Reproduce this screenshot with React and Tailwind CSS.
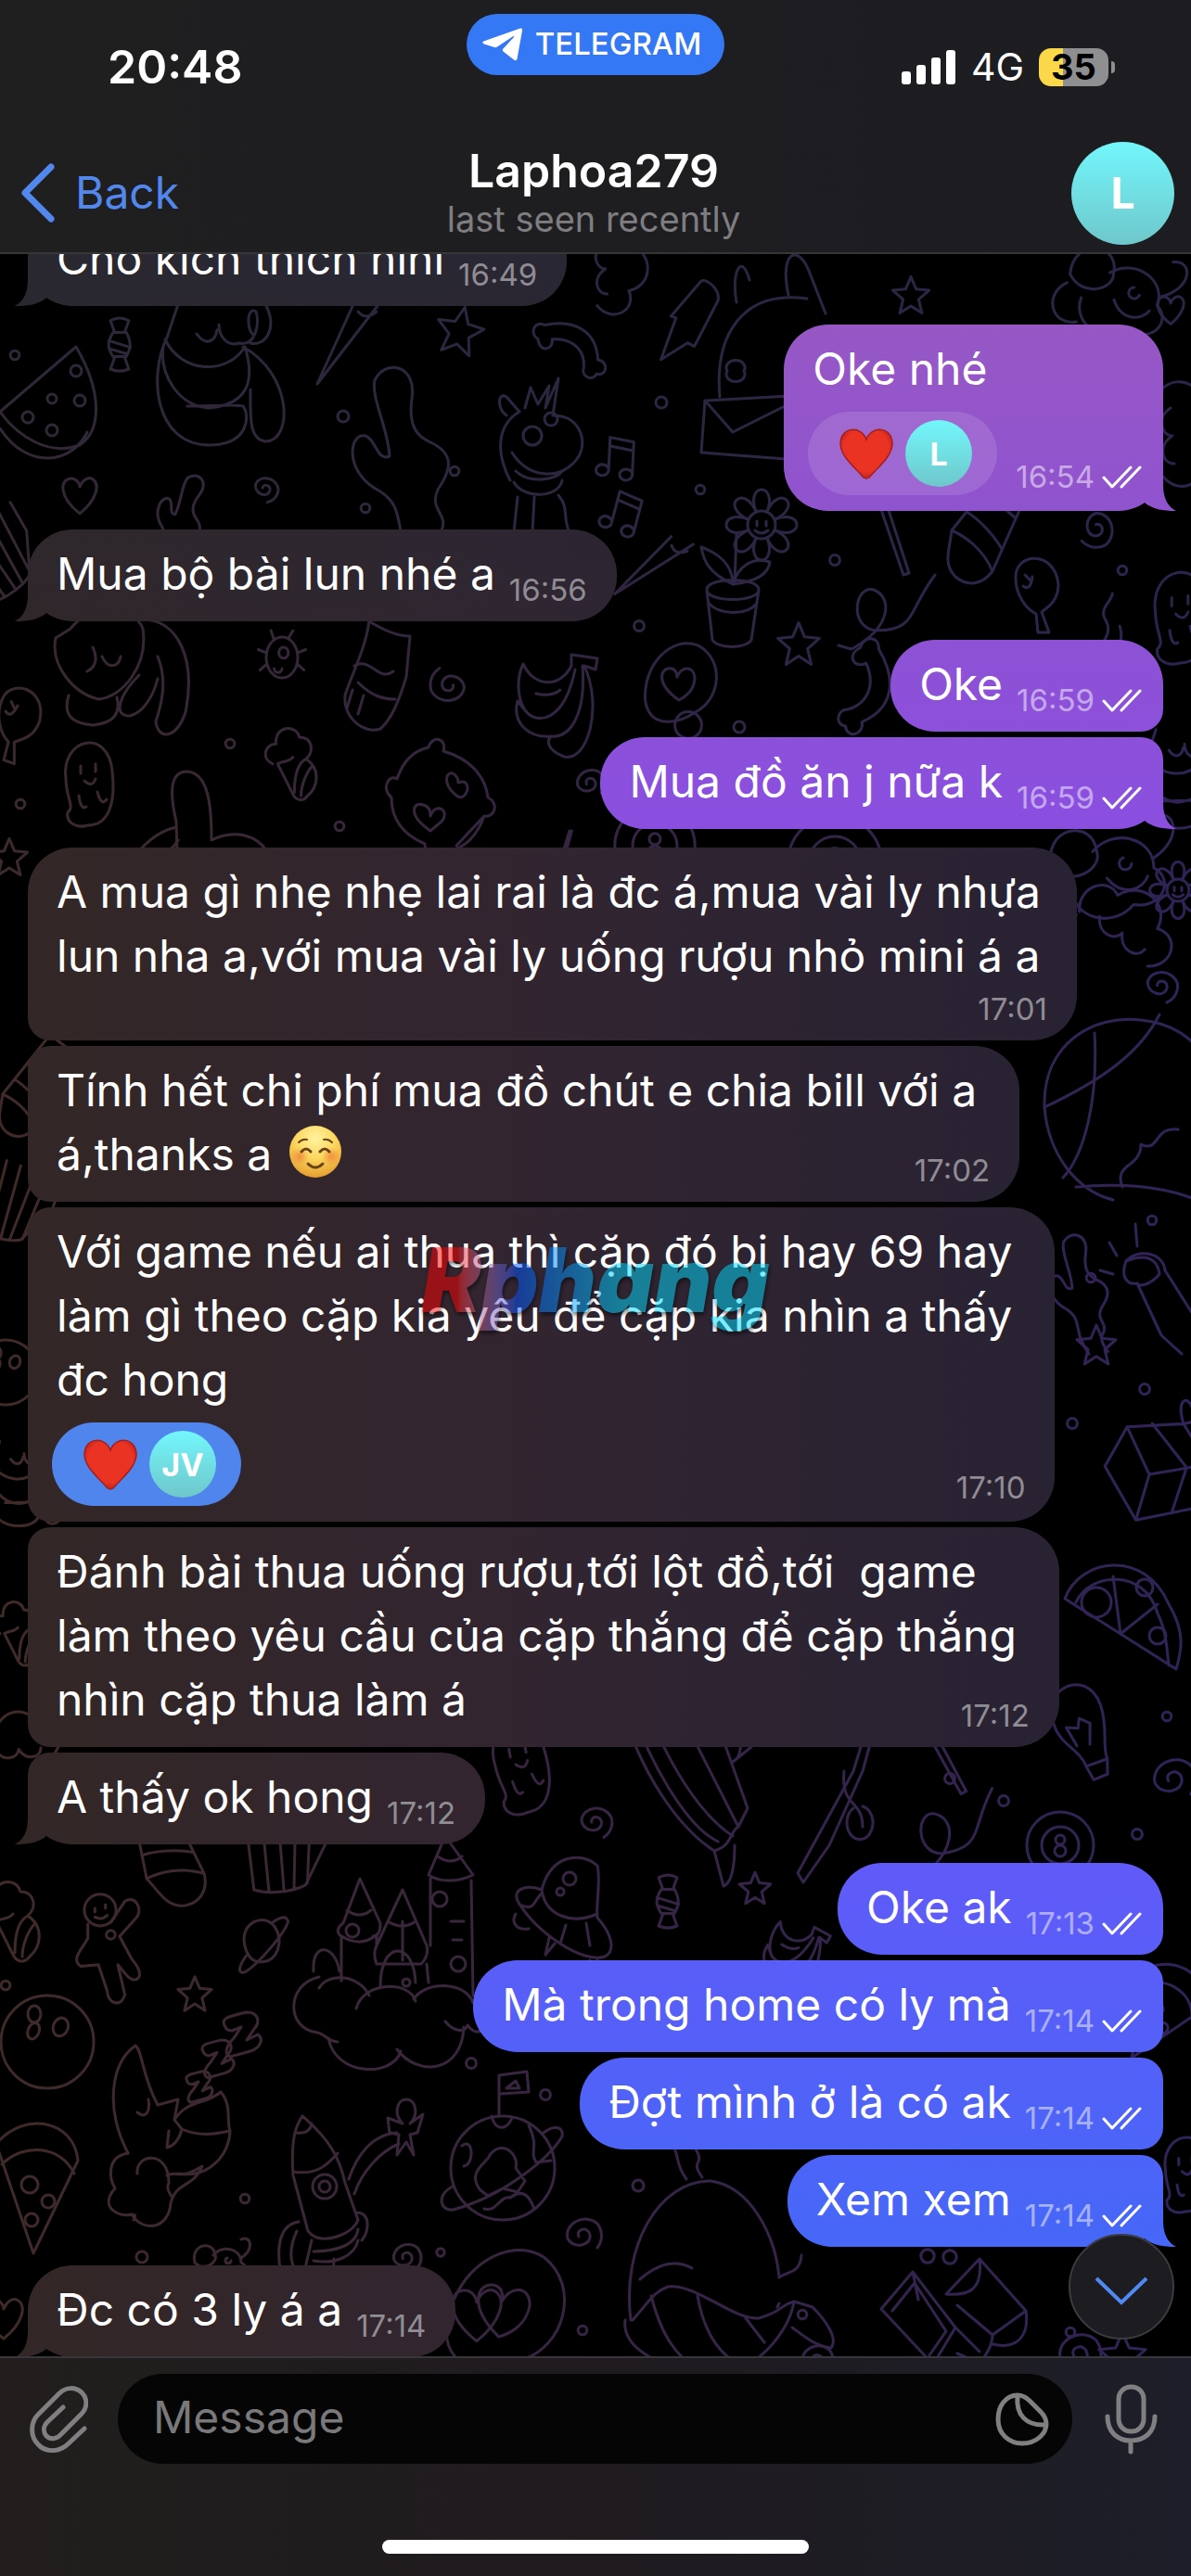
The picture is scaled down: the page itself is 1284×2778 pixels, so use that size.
import React from "react";

const MOTIFS = {
  star: <path d="M0-28L8-9L28-7L12 7L17 28L0 17L-17 28L-12 7L-28-7L-8-9Z" />,
  spiral: <path d="M-2 2C-6-6 8-10 10 0C12 12-8 16-14 4C-18-12 4-24 18-12C24-4 24 6 18 14" />,
  dot: <circle r="6" />,
  heart: <path d="M0 22C-26 2-24-20-10-20C-4-20 0-14 0-10C2-16 8-22 14-20C26-14 20 6 0 22Z" />,
  candy: (
    <path d="M-6-14L-11-28C-4-32 4-32 11-28L6-14M-8-14C-15-2-15 4-8 15L8 15C14 4 14-2 8-14ZM-13-4L13 4M-11 6L9 12M-6 16L-11 30C-4 33 4 33 11 30L6 16" />
  ),
  note: <path d="M-14 18a8 7 0 1 1-1-4M-14 18L-12-24L18-18L16 24a8 7 0 1 1-1-4M-12-13L17-7" />,
  bone: (
    <path d="M-40-12C-52-20-44-36-32-30C10-38 34-20 36 14C50 16 48 36 34 32C30 42 14 36 18 24C20 6 8-14-22-12C-20 2-38 6-40-12Z" />
  ),
  flower: (
    <g>
      <circle r="15" />
      <path d="M-5-4L-5 1M5-4L5 1M-7 6Q0 12 7 6" />
      {[0, 45, 90, 135, 180, 225, 270, 315].map((a) => (
        <path key={a} transform={`rotate(${a})`} d="M-6-14C-18-46 18-46 6-14" />
      ))}
    </g>
  ),
  pot: (
    <path d="M-28-10C-28-24 28-24 28-10C28 4-28 4-28-10L-22 44C-16 54 14 54 20 44L28-10M-26 4C-16 18 18 18 26 4M0-16C-30-30-32-46-34-56C-12-48 0-34 0-16C6-36 22-46 40-40C38-24 18-18 0-16M2-16L4-70" />
  ),
  banana: (
    <path d="M22-56L50-52L48-40L36-44C56 0 40 60 14 54C-6 46-4 36 0 32C-24 34-42 18-36-6L-28 4C-38-12-36-34-30-46C-18-20 10-20 22-44ZM-28 4C-16 20 14 18 26-40M0 32C20 34 38 10 34-44M-16-14Q0-10 10-18" />
  ),
  avocado: (
    <g>
      <path d="M-36 22C-40-22-4-54 24-42C54-26 50 20 20 34C4 46-30 54-36 22Z" />
      <path d="M2 20C-24 2-20-16-8-16C-2-16 0-10 0-6C4-18 18-20 20-6C20 8 10 16 2 20Z" />
    </g>
  ),
  ghost: (
    <path d="M-24 0C-30-44 22-56 26-8C30 26 22 50 0 50C-14 54-24 46-22 36C-14 30-24 20-24 0M-8-14V-6M8-16V-8M-4 2Q4 10 8 0M-10 18Q-8 34-2 30M10 14Q14 30 20 22" />
  ),
  cupcake: (
    <path d="M-20 2C-34-4-30-22-16-22C-18-44 8-46 12-30C28-30 30-12 20-4C38 8 34 30 22 40C16 48 8 46 4 38L-14 2C-8-2 0 0 4-6M20-4C8 2 6 20 6 36M28 4C20 12 14 28 14 40" />
  ),
  pillow: (
    <path d="M-10-50C-6-64 10-60 6-46C40-36 52-14 54 4C66 10 62 26 50 24C40 52 20 64 6 60C-2 72-14 66-14 54C-42 42-50 22-50 4C-62-6-52-22-44-16C-38-34-28-46-10-50M-8 40C-34 22-26 8-16 12C-8 14-8 20-8 24C-2 8 14 18 4 30ZM18 0C6-10 8-24 16-22C20-20 22-16 22-12C32-16 34-6 30 0C26 6 22 4 18 0M50 24L20 56" />
  ),
  sock: (
    <path d="M-6-60C10-50 26-44 38-44L34 0C26 26 18 46 6 56C-12 62-34 44-32 20C-26 0-10-30-6-60ZM-22-12C-4-22 4 6 20-6M-18 6C-4 20 8 24 22 24M-24 14L-30 34M-12 20L-18 40" />
  ),
  duck: (
    <path d="M-6 60L-8-10C-16-44-14-64 4-64C26-62 30-30 30 10C54-2 78 4 90 22L110 38M-8-4C-34 2-50 22-60 38C-30 34-14 24-6 10M80 22L104 52" />
  ),
  bug: (
    <path d="M-20 0a20 26 0 1 0 40 0a20 26 0 1 0-40 0M-10-22L-14-34M8-24L14-34M-20-6L-30-10M20-6L30-10M-19 8L-28 16M19 8L28 16M-4-6a6 7 0 1 0 12 0a6 7 0 1 0-12 0M-10 14a5 5 0 1 0 10 0" />
  ),
  puppy: (
    <path d="M-60-40C-66-10-40 20-14 26C12 24 40-10 34-50C24-76-20-80-44-50ZM-46 22C-52 42-44 52-20 54C4 52 10 40 6 24M34-60C70-60 92-20 80 40C70 70 50 70 48 50C58 20 58 0 50-20M30 0C10 20 0 44 20 44C36 40 46 20 50 4M-20-30C-16-22-14-10-26-4M-10-20C-4-6 8-8 10-20" />
  ),
  watermelon: (
    <g>
      <path d="M-54 40L28-30C56 18 56 60 32 76C0 88-34 68-54 40M40 62C24 96-24 104-54 58" />
      <circle cx="28" cy="-4" r="6" />
      <circle cx="2" cy="26" r="5" />
      <circle cx="32" cy="28" r="6" />
      <circle cx="-24" cy="46" r="6" />
      <circle cx="2" cy="60" r="6" />
    </g>
  ),
  bear: (
    <path d="M-34-76L-46-40C-66 0-60 76 0 76C42 76 44 44 36 34C34 32-4 34-24 34M36-30C90 0 90 72 60 72C42 70 44 44 44 16M-48-38C-30 0 20 0 38-30C50 8 40 32 0 36C-34 34-54 0-50-30M-14-44C-4-30 6-36 8-48M10-54C10-40 20-30 32-34C50-30 54-56 50-68C40-74 40-50 46-44M60-76C74-50 60-30 44-34" />
  ),
  carrot: <path d="M12-44L-28 44L40-44M16-34Q24-24 36-34" />,
  giraffe: (
    <g>
      <path d="M-30 40C-46 10-44-20-20-34L-34-50C-44-56-44-36-34-30M-14-38L-8-60L0-42L12-62L8-38L22-70L16-30C44-30 54-4 44 14C28 40-10 40-28 10M-26 42C-16 60 22 60 26 40M-24 30C-10 44 20 40 26 30M-22 58L-26 96M22 56C34 70 26 80 34 96M-4 58L-6 96" />
      <circle cx="-6" cy="-8" r="10" />
      <circle cx="14" cy="-26" r="7" />
    </g>
  ),
  envelope: (
    <path d="M-50 10L60 4L50 74L-54 66ZM-50 10L-20 44L60 4M-34 6C-40-60-10-110 60-100M-16-96C-22-130-10-150-2-120M40-104C30-150 50-160 62-130L80-84M-26-22a10 8 0 1 0 18 0a10 8 0 1 0-18 0" />
  ),
  bolt: <path d="M22-52L-14-10L-8-8L-26 42L6 22L14 26L42-28C46-40 30-56 22-52Z" />,
  balloon: (
    <path d="M40 100C10 60 30 40 0 20C-40 0-34-44-16-40C-4-36-4-12 10-18C8-50-10-80-6-100C6-124 40-116 34-80C30-50 40-40 52-34C84-20 74 0 62 18C52 40 74 44 66 62C58 74 66 84 74 96" />
  ),
  lolly: (
    <path d="M-2-22L26 60L32 58L6-22M-8-24L12-24M60 60C30 100 40 120-4 120C-34 116-26 70-6 76C14 84 14 116-30 140L-44 136" />
  ),
  cone: <path d="M-30 50C-44 36-36 20-34 0L30-80L56-60L10 44C-2 60-18 60-30 50ZM-34 0C-20 6 0 20 10 44M0-40C14-34 26-20 34-14M-18-20C-4-12 12 6 20 20" />,
  chick: <path d="M-22-6C-24-34 20-38 24 0C24 20 10 26 6 30L14 52L2 52L0 32C-12 26-22 10-22-6M-12-10L-6-4M-14 2Q-6 8-4-8" />,
  steam: <path d="M-10 40C-24 20 10 10-6-16C-14-30 4-40 4-50M14 40C4 24 22 16 14-6" />,
  basketball: (
    <path d="M-64 10C-66-60-10-90 40-84C80-80 100-60 120-30M-64 10C-60 60-30 100 10 110M-64 10C0-20 40-50 60-90M-10-70C-6 0-20 60-44 86M-30 96C40 90 100 100 130 130M20 96C10 70 40 76 40 50C60 60 54 30 80 34" />
  ),
  pizza: (
    <g>
      <path d="M-56 4C-40-40 30-50 56 10C74 40 70 60 64 80L4 42ZM-44 8C-30-24 30-30 44 20C54 40 54 60 56 76M4 42L-4-20M4 42L44 10" />
      <circle cx="-22" cy="8" r="16" />
      <circle cx="30" cy="-8" r="9" />
      <circle cx="44" cy="44" r="9" />
    </g>
  ),
  slice: (
    <g>
      <path d="M-40-18C-10-54 44-44 48 0L0 100ZM-34 4C-10-20 30-16 44 14" />
      <circle cx="-4" cy="26" r="9" />
      <circle cx="16" cy="44" r="7" />
      <circle cx="-2" cy="64" r="7" />
    </g>
  ),
  bulb: (
    <path d="M-30-20C-34-60 20-70 24-26C26 0 14 16 16 32L-8 34C-10 14-30 4-30-20ZM-8 34L-4 50L12 48L16 32M-12 10L-18-12L-6-8L-2-18L8-10L2 12" />
  ),
  torch: (
    <path d="M-20-20C-26-4-20 6-8 4L18 60L40 80M-20-20C-8-34 20-30 22-10L60 50M-20-20C0-28 14-24 16-6C6 6-6 8-8 4M-30-26L-38-40M-34-6L-48-10M-8-36L-10-60" />
  ),
  gift: <path d="M-50-10L20-40L70 0L0 40ZM-50-10L-60 50L4 104L0 40M4 104L76 60L70 0M-20-26L44 14L46 78M20-40C0-66 10-80 24-64C44-80 50-56 20-40" />,
  castle: (
    <g>
      <path d="M-64 4L-64-44C-70-48-68-54-62-58L-44-106L-22-58C-22-50-24-44-30-44M-64-44Q-44-32-28-44M-26-14C-30-24-28-30-26-34L2-94L28-34C30-26 28-20 22-14ZM-26-46L-26-34M30 6L28-14M30-110L48-152L78-110C60-102 42-102 30-110ZM32-106L32-34M76-104L78 20M-58-72Q-44-62-32-72M-14-60Q2-50 16-60M40-130Q54-120 66-130M2-60L2-18M56-40L66-40M54-60L68-60M-22 10C-22-40 14-40 16 6" />
      <circle cx="42" cy="-84" r="8" />
      <circle cx="-52" cy="-50" r="7" />
      <circle cx="62" cy="-14" r="8" />
      <circle cx="6" cy="6" r="4" />
      <path d="M-94-6C-96-40-70-34-66-6M-88 12C-78-6-44-2-34 20M-48 34C-40 4 10 4 16 26M14 24C26 4 70 4 78 28M-88 0C-124 8-124 56-90 60C-84 60-78 70-68 70M-78 66C-70 108-8 108 0 80M-4 78C18 108 66 104 68 54M48 48C58 60 70 60 72 52C86 70 96 50 90 34" />
    </g>
  ),
  ufo: (
    <g>
      <path d="M-34-24C-24-62 8-66 26-50C30-34 24-4 26 6C42 24 46 42 34 48C10 56-40 22-60-12C-66-26-48-30-34-24C-30 4-2 14 26 2M-58-8C-40 0-44-12-34-20M-62 2C-68 12-60 20-48 18M-26 28L-30 46L-20 34M-14 34L-8 14M14 12L18 36M18 52L22 64L26 52" />
      <circle cx="-4" cy="-36" r="7" />
      <circle cx="-14" cy="-22" r="4" />
    </g>
  ),
  zed: <path d="M-18-12C-22-20-12-22 6-26C20-26 20-14 14-8L6 4L18-2C24 2 22 12 10 16L-12 22C-20 18-14 8-8 2L0-10L-10-6Q-16-6-18-12Z" />,
  gingerbread: (
    <g>
      <circle cy="-36" r="18" />
      <path d="M12-22L28-46C40-54 50-36 40-26L22-6L36 20C54 40 40 50 30 38L20 26L28 60C24 76 8 70 8 56L-2 26L-22 28C-34 20-20 8-14-4L-14-20M-6-38L-6-34M6-42L6-38M-6-28Q2-24 8-30" />
      <circle cx="12" cy="-8" r="5" />
    </g>
  ),
  saturn: <path d="M-18 4C-24-22 4-36 18-18C30 0 20 24 4 24C-10 26-16 14-18 4M-14 14C-30 34-24 42-14 34C0 24 30-10 34-24C32-32 24-30 14-22" />,
  bowling: (
    <g>
      <circle r="50" />
      <ellipse cx="-14" cy="-30" rx="7" ry="9" />
      <ellipse cx="8" cy="-20" rx="8" ry="10" transform="rotate(20)" />
      <ellipse cx="-18" cy="-6" rx="6" ry="9" transform="rotate(20)" />
    </g>
  ),
  moon: (
    <g>
      <path d="M-30 56C-54 10-50-40-22-60C-14-54-16-30 2 4L24-2L20 20L28 30C46 38 62 36 80 32C80 54 60 84 24 78M20 20C34-2 54 4 70-10C82 4 76 20 80 32M-20 12C-10 20-6 10-8-2M14 32L12 50C20 48 26 40 28 30" />
      <path d="M-30 56C-54 60-50 84-44 94C-62 114-40 126-26 122C-14 142 14 138 16 110M-26 122Q-20 122-24 128M-20 78C-22 56 14 52 14 88C12 92 12 96 18 104M12 80C24 74 24 86 50 70C40 94 22 86 16 110" />
    </g>
  ),
  rocket: (
    <g>
      <path d="M-18 40L-34-20C-36-50-34-70-24-84C4-60 16-40 22-12L36 28C30 44 0 54-14 44ZM-34-24C-10-20 2-30 14-44M-32-66Q-16-64-14-76M-28 30C-54 34-52 70-44 100C-20 120 10 110 10 70M-30 40C-44 70-30 94-22 84L-14 50M34 20C50 20 48 40 40 50M-12 62C10 62 34 56 36 38M-12 72C10 76 32 68 36 50" />
      <circle cx="0" cy="-8" r="13" />
      <circle cx="0" cy="-8" r="6" />
      <path d="M26-16C34-40 50-64 78-66M32 0C40-24 60-46 80-54M84-76C74-86 78-102 88-102C98-102 102-86 92-76L106-86L100-66L92-64L96-42L88-56L78-42L80-64L70-66L68-82Z" />
    </g>
  ),
  planet: (
    <g>
      <circle r="56" />
      <path d="M-4-56L-4-100L26-104L28-82L-2-80M4-86L14-94L18-86ZM-12-56C-8-40 4-40 10-54M-54 20C-74 30-66 50-50 44C0 30 50-10 64-34C66-46 54-46 44-38M-24 24C-40 4-16-6-14-14C0-32 18-14 14 0L24 14L16 26L0 22L-16 30ZM-44-24C-32-34-30-4-42-2M28-46C40-20 28-20 36-6L52-8M-20 44C-6 48-4 30 8 32C24 20 30 34 34 44" />
    </g>
  ),
  whale: (
    <path d="M-100 110C-110 30-70-40-14-40C30-34 56 20 60 64C72 56 82 60 84 40M-98 110C-80 90-76 80-60 74C-30 70 10 110 38 108C66 100 60 94 76 90C70 130 20 178-20 170C-70 160-110 140-106 110M-78 84C-66 130-50 150-20 170M-28 84C-20 130 0 150 20 160M76 90L96 96C110 110 124 130 116 140C100 138 90 130 74 118M24 108L44 134M-90 66Q-60 40-34 54M58 96L60 92" />
  ),
  chocolate: (
    <path d="M-70 0L-36-40L10 20L-14 60ZM-58 2L-34-28L0 24L-18 50M-36-40L-30-10M0-16L36-54C40-20 24-14 0-16ZM36-54L86 2C90 30 76 44 50 38M86 2L50 28L12-4M50 28C50 40 40 60 20 70M-14 60L-10 80M10 20L36 46M12 48L40 60" />
  ),
  popcorn: <path d="M-50-80L-38 20C-20 26 10 22 24 14L50-40L50-84M-30-80L-20 22M-10-80L-2 22M12-80L10 18M30-80L26 12" />,
  boat: <path d="M-60-90C-40-20 0 40 40 66C60 60 56 46 66 40L76 20L44-70M-50-90C-30-30 10 40 44 56M-30-80C0-10 30 30 60 50M0-90L66 40M40 66L50 104C60 100 62 80 62 60M44-70C60-100 80-40 60-30M60-30L80-46" />,
  wand: <path d="M60-110L20 20L-40 130L-34 140L-6 100L30 20L66-110M10 20C6 60 30 50 30 80M20 60a14 18 0 1 0 10-2" />,
  eight: (
    <g>
      <circle r="36" />
      <circle r="20" />
      <circle cy="-6" r="5" />
      <circle cy="6" r="6" />
    </g>
  ),
  crab: <path d="M-60 0C-70-40-20-50-16-16C-10 0-40 20-60 0M-20-16C0-40 40-30 40 0C60 10 50 40 20 36C0 60-40 50-40 20M40-10C70-30 60-60 40-50M10-10a6 6 0 1 0 8 6M-6 10C10 30 30 20 34 8M-60 10C-80 30-60 60-36 46" />,
  cloudy: <path d="M-50 20C-70 0-50-30-30-20C-20-50 20-50 26-20C50-30 66 0 44 18M-30 10C-20 26 0 20 0 8C10 24 30 20 30 6" />,
};

const PLACED = [
  ["watermelon", 54, 404, 1, 0], ["candy", 129, 371, 0.9, 0], ["bear", 226, 404, 1, 0],
  ["carrot", 370, 370, 1, 0], ["star", 496, 356, 0.9, 12], ["bone", 614, 376, 0.85, 0],
  ["balloon", 410, 510, 1, 0], ["giraffe", 580, 478, 1, 0], ["note", 668, 492, 0.85, 0],
  ["note", 674, 552, 0.85, 12], ["heart", 86, 534, 0.9, 0], ["spiral", 285, 526, 0.7, 40],
  ["bolt", 736, 350, 0.9, 0], ["envelope", 810, 422, 1, 0], ["star", 982, 318, 0.7, 0],
  ["dot", 16, 383, 0.8, 0], ["dot", 370, 449, 1, 0], ["dot", 713, 434, 1, 0], ["dot", 490, 508, 0.8, 0],
  ["dot", 394, 548, 0.8, 0], ["dot", 755, 528, 0.8, 0], ["crab", 1210, 316, 1, 20],
  ["heart", 1262, 334, 0.7, 0], ["cloudy", 660, 290, 0.9, 90], ["balloon", 180, 560, 0.5, 30],
  ["flower", 821, 566, 1, 0], ["pot", 790, 646, 1, 0], ["lolly", 948, 560, 1, 0],
  ["cone", 1060, 572, 1, 0], ["spiral", 1183, 568, 1, 100], ["chick", 1117, 630, 1, 0],
  ["carrot", 700, 612, 0.9, 20], ["dot", 900, 604, 0.9, 0], ["dot", 1210, 615, 0.8, 0],
  ["steam", 1196, 680, 0.8, 0], ["ghost", 1272, 660, 1.1, 0], ["cloudy", 1272, 470, 1, 90],
  ["popcorn", 10, 620, 0.8, -30], ["puppy", 120, 728, 1, 0], ["bug", 304, 709, 0.85, 0],
  ["sock", 404, 730, 1, 0], ["spiral", 486, 740, 1, 200], ["banana", 594, 762, 1, 0],
  ["avocado", 730, 736, 0.95, 0], ["dot", 689, 675, 0.9, 0], ["star", 861, 694, 0.8, 0],
  ["dot", 797, 784, 1, 0], ["dot", 742, 782, 2.4, 0], ["bone", 930, 740, 1, 70],
  ["ghost", 95, 840, 1, 0], ["cupcake", 312, 822, 0.9, 0], ["dot", 248, 802, 0.8, 0],
  ["dot", 22, 867, 0.8, 0], ["duck", 198, 896, 1, 0], ["pillow", 472, 856, 1, 0],
  ["dot", 366, 891, 0.8, 0], ["spiral", 634, 844, 0.8, 0], ["chick", 20, 770, 1, 20],
  ["eight", 706, 912, 1.2, 0], ["wand", 590, 940, 0.4, 0], ["eight", 900, 930, 1.4, 0],
  ["bear", 1270, 840, 0.7, 0], ["crab", 1200, 936, 1.1, 0], ["cloudy", 1215, 1000, 1, 40],
  ["spiral", 1250, 1062, 0.9, 30], ["flower", 1270, 960, 0.8, 0], ["basketball", 1190, 1184, 1, 0],
  ["star", 10, 924, 0.7, 0], ["cone", 30, 1180, 0.8, 0], ["popcorn", 8, 1320, 0.8, 20],
  ["bowling", 6, 1480, 0.7, 0], ["torch", 1234, 1380, 1, 0], ["star", 1182, 1450, 0.75, 0],
  ["dot", 1176, 1378, 0.8, 0], ["dot", 1242, 1316, 0.8, 0], ["dot", 1234, 1498, 0.9, 0],
  ["dot", 1156, 1535, 0.9, 0], ["gift", 1250, 1560, 0.8, 20], ["balloon", 1150, 1400, 0.6, 0],
  ["bear", 20, 1600, 0.6, 0], ["pizza", 1204, 1720, 1, 0], ["bulb", 1170, 1870, 1, -15],
  ["spiral", 1262, 1918, 1.2, 0], ["dot", 1258, 1851, 0.8, 0], ["cupcake", 16, 1760, 0.8, 0],
  ["boat", 730, 1930, 1, 0], ["wand", 900, 1890, 1, 0], ["lolly", 1000, 1880, 1, -10],
  ["dot", 1024, 1918, 0.9, 0], ["dot", 1082, 1942, 0.9, 0], ["eight", 1143, 1990, 1, 0],
  ["dot", 1226, 1978, 0.9, 0], ["ghost", 560, 1900, 1.1, -10], ["spiral", 640, 1964, 0.9, 20],
  ["cone", 180, 2000, 1, -50], ["popcorn", 308, 2020, 0.9, 0], ["cloudy", 20, 1880, 0.8, 0],
  ["cupcake", 10, 2070, 1, 0], ["gingerbread", 108, 2094, 0.95, 0], ["saturn", 280, 2094, 0.9, 0],
  ["castle", 432, 2132, 1, 0], ["ufo", 618, 2062, 1, 0], ["candy", 720, 2050, 0.9, 0],
  ["star", 814, 2036, 0.6, 0], ["banana", 850, 2110, 0.7, 20], ["star", 210, 2150, 0.65, 0],
  ["bowling", 51, 2202, 1, 0], ["moon", 168, 2266, 1, 0], ["zed", 260, 2196, 1, 0],
  ["zed", 234, 2222, 0.85, 0], ["zed", 214, 2252, 0.7, 0], ["slice", 36, 2330, 1, 0],
  ["dot", 6, 2141, 0.8, 0], ["dot", 508, 2225, 0.9, 0], ["dot", 588, 2259, 0.9, 0],
  ["rocket", 350, 2366, 1, 0], ["planet", 542, 2338, 1, 0], ["spiral", 626, 2410, 1, 0],
  ["dot", 688, 2357, 1, 0], ["balloon", 720, 2300, 0.5, 0], ["dot", 264, 2371, 0.8, 0],
  ["whale", 780, 2392, 1, 0], ["chocolate", 1020, 2490, 1, 0], ["spiral", 436, 2434, 0.8, 0],
  ["dot", 153, 2434, 1, 0], ["dot", 475, 2429, 0.7, 0], ["heart", 514, 2496, 1.3, 0],
  ["avocado", 540, 2490, 1.5, 10], ["crab", 240, 2440, 0.5, 0], ["dot", 865, 2496, 0.8, 0],
  ["dot", 628, 2513, 0.8, 0], ["dot", 1000, 2433, 1.2, 0], ["dot", 1024, 2434, 1.2, 0],
  ["spiral", 878, 2545, 0.9, 0], ["spiral", 1160, 2538, 1.2, 0], ["dot", 1154, 2515, 0.8, 0],
  ["star", 1210, 2540, 0.9, 0], ["ghost", 1278, 2340, 0.9, 0], ["slice", 1260, 2150, 0.8, 30],
  ["heart", 4, 2500, 1, 0],
];

function Wallpaper() {
  return (
    <svg
      className="absolute inset-0 size-full"
      viewBox="0 274 1284 2267"
      preserveAspectRatio="xMidYMid slice"
      aria-hidden="true"
    >
      <defs>
        <linearGradient id="wp-x" x1="0" x2="1" y1="0" y2="0">
          <stop offset="0" stopColor="#402a29" />
          <stop offset="0.45" stopColor="#372541" />
          <stop offset="1" stopColor="#302358" />
        </linearGradient>
        <linearGradient id="wp-y" x1="0" x2="0" y1="0" y2="1">
          <stop offset="0" stopColor="#26263f" stopOpacity="0.75" />
          <stop offset="0.35" stopColor="#26263f" stopOpacity="0" />
        </linearGradient>
        <mask id="wp-mask" maskUnits="userSpaceOnUse" x="0" y="274" width="1284" height="2267">
          <g fill="none" stroke="#fff" strokeLinecap="round" strokeLinejoin="round">
            {PLACED.map(([name, x, y, s, r], i) => (
              <g key={i} strokeWidth={3 / s} transform={`translate(${x} ${y}) rotate(${r}) scale(${s})`}>
                {MOTIFS[name]}
              </g>
            ))}
          </g>
        </mask>
      </defs>
      <g mask="url(#wp-mask)">
        <rect x="0" y="274" width="1284" height="2267" fill="url(#wp-x)" />
        <rect x="0" y="274" width="1284" height="2267" fill="url(#wp-y)" />
      </g>
    </svg>
  );
}

const IN_BG =
  "bg-fixed bg-[linear-gradient(to_bottom,rgba(38,40,52,0.8)_8%,rgba(38,40,52,0)_32%),linear-gradient(to_right,#332726_0%,#322530_42%,#282233_90%)]";
const OUT_BG =
  "bg-fixed bg-[linear-gradient(to_bottom,#9758c4_12%,#9053cf_20%,#8a4fdf_32%,#615af8_72%,#4667f7_87%)]";

function Checks() {
  return (
    <svg className="ml-2 h-[25px] w-[43px]" viewBox="0 0 43 25" fill="none" stroke="#fff" strokeWidth="3" strokeLinecap="round" strokeLinejoin="round" aria-label="Read">
      <path d="M2 13L11 23L31 2M21 23L41 2" />
    </svg>
  );
}

function Time({ out, children, className = "" }) {
  return (
    <div className={`flex items-center text-[33px] leading-[40px] ${out ? "text-white/50" : "text-[#8f8c93]"} ${className}`}>
      <time>{children}</time>
      {out && <Checks />}
    </div>
  );
}

function Heart() {
  return (
    <svg className="h-[56px] w-[58px]" viewBox="0 0 58 56" aria-label="Heart">
      <defs>
        <radialGradient id="heart-fill" cx="0.5" cy="0.42" r="0.62">
          <stop offset="0.7" stopColor="#eb3323" />
          <stop offset="1" stopColor="#b3221b" />
        </radialGradient>
      </defs>
      <path d="M29 13C24-2 1-2 1 18C2 32 16 42 26 54Q29 56 32 54C42 42 56 32 57 18C57-2 34-2 29 13Z" fill="url(#heart-fill)" stroke="#a31f19" strokeWidth="1.5" />
    </svg>
  );
}

function Smile() {
  return (
    <svg className="ml-1 inline-block size-[58px] align-[-9px]" viewBox="0 0 58 58" role="img" aria-label="Smiling face">
      <defs>
        <radialGradient id="face" cx="0.5" cy="0.25" r="0.78">
          <stop offset="0" stopColor="#fff3a0" />
          <stop offset="0.5" stopColor="#fbd65c" />
          <stop offset="1" stopColor="#e29a2c" />
        </radialGradient>
        <radialGradient id="cheek">
          <stop offset="0" stopColor="#f08a3c" stopOpacity="0.9" />
          <stop offset="1" stopColor="#f08a3c" stopOpacity="0" />
        </radialGradient>
      </defs>
      <circle cx="29" cy="29" r="28" fill="url(#face)" />
      <circle cx="12" cy="34" r="10" fill="url(#cheek)" />
      <circle cx="46" cy="34" r="10" fill="url(#cheek)" />
      <g fill="none" stroke="#6b4218" strokeLinecap="round" strokeWidth="3">
        <path d="M14 29Q19 23 24 29M34 29Q39 23 44 29M21 42Q29 50 37 42" />
        <path d="M11 19Q15 15 20 16M38 16Q43 15 47 19" strokeWidth="2" />
      </g>
    </svg>
  );
}

function Reaction({ initials, className }) {
  return (
    <button type="button" className={`flex h-[90px] w-[204px] items-center justify-between rounded-full pr-[27px] pl-[34px] ${className}`}>
      <Heart />
      <span className="flex size-[72px] items-center justify-center rounded-full bg-linear-to-b from-[#72f7fc] to-[#6ec7ca] text-[34px] font-bold text-white">
        {initials}
      </span>
    </button>
  );
}

function Tail({ out }) {
  return out ? (
    <span className={`absolute -right-[14px] bottom-0 h-[50px] w-[48px] ${OUT_BG} [clip-path:path('M14_0L34_0L34_22C34_38_40_46_48_50C34_50_22_48_14_41Z')]`} />
  ) : (
    <span className={`absolute bottom-0 -left-[14px] h-[50px] w-[48px] ${IN_BG} [clip-path:path('M34_0L14_0L14_22C14_38_8_46_0_50C14_50_26_48_34_41Z')]`} />
  );
}

const TIME_PLACE = {
  beside: "col-start-2 row-start-1 self-end ml-[15px]",
  over: "col-start-1 row-start-1 place-self-end",
  below: "col-start-1 row-start-2 justify-self-end",
};

const TEXT_PLACE = {
  beside: "mb-[3px]",
  over: "mb-[3px] pr-[14px]",
  below: "mb-[3px] pr-[7px]",
};

function Bubble({ out, time, tail, place = "beside", gap, reaction, corners, children }) {
  const bg = out ? OUT_BG : IN_BG;
  return (
    <li className={`relative w-fit max-w-[94%] ${corners} ${bg} ${gap ? "mt-5" : "mt-[6px]"} ${out ? "self-end" : "self-start"}`}>
      {tail && <Tail out={out} />}
      {reaction ? (
        <div className={`relative pt-[13px] pb-[17px] ${out ? "pr-[23px]" : "pr-[32px]"}`}>
          <p className="pr-[14px] pl-[31px] whitespace-pre-wrap">{children}</p>
          <div className="mt-3 flex items-end justify-between pl-[26px]">
            {reaction}
            <Time out={out} className="ml-5">{time}</Time>
          </div>
        </div>
      ) : (
        <div className={`relative grid pt-[13px] pb-[14px] pl-[31px] ${out ? "pr-[23px]" : "pr-[32px]"}`}>
          <p className={`col-start-1 row-start-1 whitespace-pre-wrap ${TEXT_PLACE[place]}`}>{children}</p>
          <Time out={out} className={TIME_PLACE[place]}>{time}</Time>
        </div>
      )}
    </li>
  );
}

function Header() {
  return (
    <header className="relative z-10 border-b-2 border-[#363639] bg-linear-to-r from-[#1f1f20] to-[#1d1c21]">
      <div className="grid h-36 grid-cols-3 items-center">
        <span className="pl-[116px] text-[50px] leading-none font-semibold">20:48</span>
        <button type="button" className="mt-[15px] flex h-[66px] w-[278px] items-center justify-center gap-[14px] self-start justify-self-center rounded-full bg-[#3478f6] pr-2 text-[33px] font-medium">
          <svg className="h-[36px] w-[43px]" viewBox="0 0 43 36" fill="#fff" aria-hidden="true">
            <path d="M41 .5Q43.500 0 43 3L37.500 33.500Q36.800 36.500 34 34.500L22.500 25.500Q21 24 22.500 22.500L34 10Q35 8.200 33 9.300L16 20.500Q14.500 21.500 13 21L2 17.500Q-1.500 16 2 14.300Z" />
          </svg>
          TELEGRAM
        </button>
        <div className="flex items-center justify-end pr-[82px]">
          <svg className="h-[37px] w-[59px]" viewBox="0 0 59 37" fill="#fff" aria-label="Signal">
            <rect x="0" y="23" width="10" height="14" rx="3" />
            <rect x="16" y="16" width="10" height="21" rx="3" />
            <rect x="32" y="8" width="10" height="29" rx="3" />
            <rect x="48" y="0" width="10" height="37" rx="3" />
          </svg>
          <span className="ml-4 text-[41px] leading-none">4G</span>
          <span className="ml-4 flex h-[41px] w-[75px] items-center justify-center rounded-[13px] bg-linear-to-r from-[#fad84a] from-35% to-[#8f8f92] to-35% text-[38px] leading-none font-bold text-black">
            35
          </span>
          <span className="ml-[3px] h-[13px] w-[4px] rounded-r-full bg-[#8f8f92]" />
        </div>
      </div>
      <div className="grid h-32 grid-cols-[1fr_auto_1fr] items-center pr-[18px] pl-[14px]">
        <button type="button" className="flex items-center gap-[22px] justify-self-start pl-2 text-[48px] leading-none text-[#5288ee]">
          <svg className="h-[64px] w-[37px]" viewBox="0 0 37 64" fill="none" stroke="currentColor" strokeWidth="7" strokeLinecap="round" strokeLinejoin="round" aria-hidden="true">
            <path d="M33 4L5 32L33 60" />
          </svg>
          Back
        </button>
        <div className="pb-[3px] text-center">
          <h1 className="text-[50px] leading-[58px] font-semibold">Laphoa279</h1>
          <p className="text-[38px] leading-[46px] text-[#7e7e81]">last seen recently</p>
        </div>
        <button type="button" className="flex size-[111px] items-center justify-center justify-self-end rounded-full bg-linear-to-b from-[#72f7fc] to-[#6ec7ca] text-[46px] font-bold">
          L
        </button>
      </div>
    </header>
  );
}

function Composer() {
  return (
    <footer className="relative z-10 border-t-2 border-[#38363a] bg-linear-to-r from-[#211e1d] via-[#1f1b1f] to-[#1d1e29]">
      <form className="flex items-center pt-[17px] pr-[36px] pl-[32px] text-[#808082]" onSubmit={(e) => e.preventDefault()}>
        <button type="button" aria-label="Attach">
          <svg className="h-[72px] w-[63px]" viewBox="0 0 63 72" fill="none" stroke="currentColor" strokeWidth="5" strokeLinecap="round" strokeLinejoin="round">
            <path d="M59 46L42 62C32 72 17 72 9 63C0 54 1 39 9 31L32 8C39 1 49 1 56 7C63 14 62 24 56 30L34 52C29 58 22 58 18 54C14 49 15 43 19 39L36 23" />
          </svg>
        </button>
        <div className="relative mr-[35px] ml-8 flex h-[97px] flex-1 items-center rounded-full bg-[#050505]">
          <label htmlFor="message" className="sr-only">Message</label>
          <input id="message" type="text" placeholder="Message" className="h-full w-full min-w-0 rounded-full bg-transparent pb-1 pl-[38px] text-[48px] text-white outline-none placeholder:text-[#79797b]" />
          <button type="button" aria-label="Stickers" className="mr-[25px] shrink-0">
            <svg className="size-[58px]" viewBox="0 0 58 58" fill="none" stroke="currentColor" strokeWidth="5" strokeLinecap="round" strokeLinejoin="round">
              <path d="M24 3C11 3 3 15 3 29C3 45 15 55 29 55C45 55 55 44 55 34C55 29 53 25 49 21L37 9C33 5 29 3 24 3ZM24 4C22 24 33 36 54 35" />
            </svg>
          </button>
        </div>
        <button type="button" aria-label="Record voice message">
          <svg className="h-[76px] w-[57px]" viewBox="0 0 57 76" fill="none" stroke="currentColor" strokeWidth="5" strokeLinecap="round">
            <rect x="15" y="3" width="27" height="48" rx="13" />
            <path d="M3 35C3 52 14 61 28 61C43 61 54 52 54 35M28 61V73" />
          </svg>
        </button>
      </form>
      <div className="flex h-[121px] items-end justify-center pb-[24px]">
        <span className="h-[15px] w-[460px] rounded-full bg-white" />
      </div>
    </footer>
  );
}

export default function App() {
  return (
    <div className="flex h-screen flex-col overflow-hidden bg-black text-white [font-family:Inter,'Liberation_Sans',sans-serif]">
      <Header />
      <main className="relative flex min-h-0 flex-1 flex-col justify-end overflow-hidden">
        <Wallpaper />
        <ul className="relative -mb-px flex flex-col px-[30px] text-[48px] leading-[69px]">
          <Bubble tail time="16:49" corners="rounded-[48px]">Cho kích thích hihi</Bubble>
          <Bubble out tail gap time="16:54" corners="rounded-[48px]" reaction={<Reaction initials="L" className="bg-white/12" />}>Oke nhé</Bubble>
          <Bubble tail gap time="16:56" corners="rounded-[48px]">Mua bộ bài lun nhé a</Bubble>
          <Bubble out gap time="16:59" corners="rounded-[48px] rounded-br-[24px]">Oke</Bubble>
          <Bubble out tail time="16:59" corners="rounded-[48px] rounded-tr-[24px]">Mua đồ ăn j nữa k</Bubble>
          <Bubble gap place="below" time="17:01" corners="rounded-[48px] rounded-bl-[24px]">
            {"A mua gì nhẹ nhẹ lai rai là đc á,mua vài ly nhựa\nlun nha a,với mua vài ly uống rượu nhỏ mini á a"}
          </Bubble>
          <Bubble place="over" time="17:02" corners="rounded-[48px] rounded-l-[24px]">
            {"Tính hết chi phí mua đồ chút e chia bill với a\ná,thanks a "}
            <Smile />
          </Bubble>
          <Bubble time="17:10" corners="rounded-[48px] rounded-l-[24px]" reaction={<Reaction initials="JV" className="bg-[#5085ee]" />}>
            {"Với game nếu ai thua thì cặp đó bị hay 69 hay\nlàm gì theo cặp kia yêu để cặp kia nhìn a thấy\nđc hong"}
          </Bubble>
          <Bubble place="over" time="17:12" corners="rounded-[48px] rounded-l-[24px]">
            {"Đánh bài thua uống rượu,tới lột đồ,tới  game\nlàm theo yêu cầu của cặp thắng để cặp thắng\nnhìn cặp thua làm á"}
          </Bubble>
          <Bubble tail time="17:12" corners="rounded-[48px] rounded-tl-[24px]">A thấy ok hong</Bubble>
          <Bubble out gap time="17:13" corners="rounded-[48px] rounded-br-[24px]">Oke ak</Bubble>
          <Bubble out time="17:14" corners="rounded-[48px] rounded-r-[24px]">Mà trong home có ly mà</Bubble>
          <Bubble out time="17:14" corners="rounded-[48px] rounded-r-[24px]">Đợt mình ở là có ak</Bubble>
          <Bubble out tail time="17:14" corners="rounded-[48px] rounded-tr-[24px]">Xem xem</Bubble>
          <Bubble tail gap time="17:14" corners="rounded-[48px]">Đc có 3 ly á a</Bubble>
        </ul>
        <div className="pointer-events-none absolute inset-x-0 top-[1046px] flex justify-center opacity-50">
          <span className="bg-linear-to-r from-[#ff0000] from-12% via-[#0050ff] via-28% to-[#00dcff] to-58% bg-clip-text px-2 text-[96px] leading-[120px] font-black text-transparent italic drop-shadow-[1px_3px_2px_#000]">
            Rphang
          </span>
        </div>
        <button type="button" aria-label="Scroll to latest" className="absolute right-[18px] bottom-[18px] flex size-[114px] items-center justify-center rounded-full border-2 border-[#3c3b3f] bg-[#1d1c20]">
          <svg className="mt-2 h-[31px] w-[58px]" viewBox="0 0 58 31" fill="none" stroke="#5089f2" strokeWidth="4" aria-hidden="true">
            <path d="M2 2L29 28L56 2" />
          </svg>
        </button>
      </main>
      <Composer />
    </div>
  );
}
